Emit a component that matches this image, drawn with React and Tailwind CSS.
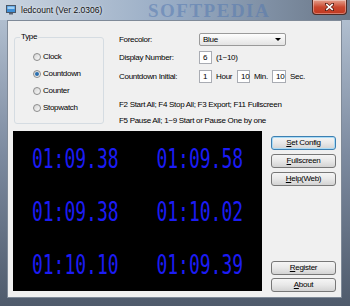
import React from 'react';

const ui = { fontFamily: '"Liberation Sans", Arial, sans-serif' };
const led = { fontFamily: '"DejaVu Sans Mono", monospace' };

const Radio = ({ label, checked }) => (
  <div className="h-[17px] flex items-center gap-[2px]">
    <span className="w-[8px] h-[8px] rounded-full border border-[#8c8c8c] bg-linear-to-br from-[#d4d4d4] to-[#fafafa] flex items-center justify-center">
      {checked && <span className="w-[4px] h-[4px] rounded-full bg-[#2a6fb0]" />}
    </span>
    <span>{label}</span>
  </div>
);

const Box = ({ children, w = 'w-[13px]' }) => (
  <div className={`${w} h-[13px] border border-[#a9acb3] bg-white pl-[3px] leading-[11px]`}>{children}</div>
);

const Btn = ({ children, focus }) => (
  <div
    className={`h-[14px] rounded-[3px] border flex items-center justify-center bg-linear-to-b from-[#f5f5f5] via-[#e8e8e8] to-[#d3d3d3] ${
      focus ? 'border-[#3c7fb1] shadow-[inset_0_0_0_1px_#a9dbf6]' : 'border-[#777]'
    }`}
  >
    {children}
  </div>
);

// two columns of six counters
const counters = ['01:09.38', '01:09.58', '01:09.38', '01:10.02', '01:10.10', '01:09.39'];

export default function App() {
  return (
    <div className="relative w-[350px] h-[306px] overflow-hidden bg-linear-to-b from-[#b8c6d6] via-[#7d8ba0] to-[#4f5b6c]" style={ui}>
      {/* title bar */}
      <div className="relative h-[20px] bg-linear-to-r from-[#cbd5e0] via-[#97abc4] to-[#6b7889] flex items-center">
        <span
          className="absolute left-[148px] top-[1px] text-[19px] leading-[19px] tracking-[1.5px] font-bold text-[#5277b0]/50"
          style={{ fontFamily: '"Liberation Serif", serif' }}
        >
          SOFTPEDIA
        </span>
        <svg className="relative ml-[6px]" width="10" height="10" viewBox="0 0 10 10">
          <rect x="0.5" y="0.5" width="9" height="7" fill="#3f8fd6" stroke="#4a5768" />
          <rect x="1.5" y="1.5" width="7" height="2.5" fill="#9fd0f5" />
          <rect x="3" y="8" width="4" height="1.5" fill="#5b6575" />
        </svg>
        <span className="relative ml-[5px] text-[8.5px] text-[#111] [text-shadow:0_0_3px_#fff]">ledcount (Ver 2.0306)</span>
        <div className="absolute right-[3px] top-0 w-[35px] h-[15px] rounded-b-[4px] border border-t-0 border-[#4d2a25] bg-linear-to-b from-[#e3a08d] via-[#c9482f] to-[#c0361f] shadow-[inset_0_0_0_1px_rgba(255,255,255,0.35)] flex items-center justify-center">
          <svg width="9" height="8" viewBox="0 0 9 8">
            <path d="M1 1 L8 7 M8 1 L1 7" stroke="#5a1d12" strokeWidth="3" strokeLinecap="square" />
            <path d="M1.2 1.2 L7.8 6.8 M7.8 1.2 L1.2 6.8" stroke="#fff" strokeWidth="1.6" />
          </svg>
        </div>
      </div>

      {/* client area */}
      <div className="relative ml-[7px] w-[335px] h-[278px] border border-[#7f8a98] bg-[#f0f0f0] text-[8px] tracking-[-0.3px] text-black">
        <div className="relative pl-[5px] pt-[12px]">
          <div className="flex h-[98px] items-start">
            {/* Type group */}
            <div className="relative ml-[1px] mt-[4px] w-[90px] h-[87px] border border-[#d5dce2] rounded-[3px] pt-[10px] pl-[18px]">
              <span className="absolute left-[5px] top-[-6px] bg-[#f0f0f0] px-[1px] leading-[10px]">Type</span>
              <Radio label="Clock" />
              <Radio label="Countdown" checked />
              <Radio label="Counter" />
              <Radio label="Stopwatch" />
            </div>

            {/* settings */}
            <div className="ml-[15px] flex flex-col">
              <div className="flex items-center h-[13px]">
                <span className="w-[80px]">Forecolor:</span>
                <div className="w-[87px] h-[13px] rounded-[2px] border border-[#9a9a9a] bg-linear-to-b from-[#fdfdfd] to-[#e4e4e4] flex items-center justify-between pl-[3px] pr-[4px]">
                  <span>Blue</span>
                  <span className="w-0 h-0 border-l-[3px] border-r-[3px] border-t-[3px] border-l-transparent border-r-transparent border-t-black" />
                </div>
              </div>
              <div className="mt-[5px] flex items-center h-[13px]">
                <span className="w-[80px]">Display Number:</span>
                <Box>6</Box>
                <span className="pl-[4px]">(1~10)</span>
              </div>
              <div className="mt-[6px] flex items-center h-[13px]">
                <span className="w-[80px]">Countdown Initial:</span>
                <Box>1</Box>
                <span className="pl-[4px] w-[25px]">Hour</span>
                <Box>10</Box>
                <span className="pl-[4px] w-[22px]">Min.</span>
                <Box w="w-[14px]">10</Box>
                <span className="pl-[4px]">Sec.</span>
              </div>
              <div className="mt-[14px] leading-[16px]">
                <div>F2 Start All; F4 Stop All; F3 Export; F11 Fullscreen</div>
                <div>F5 Pause All; 1~9 Start or Pause One by one</div>
              </div>
            </div>
          </div>

          <div className="flex">
            {/* LED panel */}
            <div className="w-[249px] h-[160px] bg-black grid grid-cols-2 grid-rows-3 items-center justify-items-center pt-[1px]" style={led}>
              {counters.map((c, i) => (
                <span key={i} className="text-[18px] leading-none tracking-normal text-[#1c1cf5] scale-y-[1.45]">
                  {c}
                </span>
              ))}
            </div>

            {/* buttons */}
            <div className="ml-[9px] w-[65px] h-[161px] flex flex-col pt-[5px]">
              <div className="flex flex-col gap-[4px]">
                <Btn focus><span><u>S</u>et Config</span></Btn>
                <Btn><span><u>F</u>ullscreen</span></Btn>
                <Btn><span><u>H</u>elp(Web)</span></Btn>
              </div>
              <div className="mt-auto flex flex-col gap-[3px]">
                <Btn><span><u>R</u>egister</span></Btn>
                <Btn><span><u>A</u>bout</span></Btn>
              </div>
            </div>
          </div>
        </div>
      </div>
    </div>
  );
}
